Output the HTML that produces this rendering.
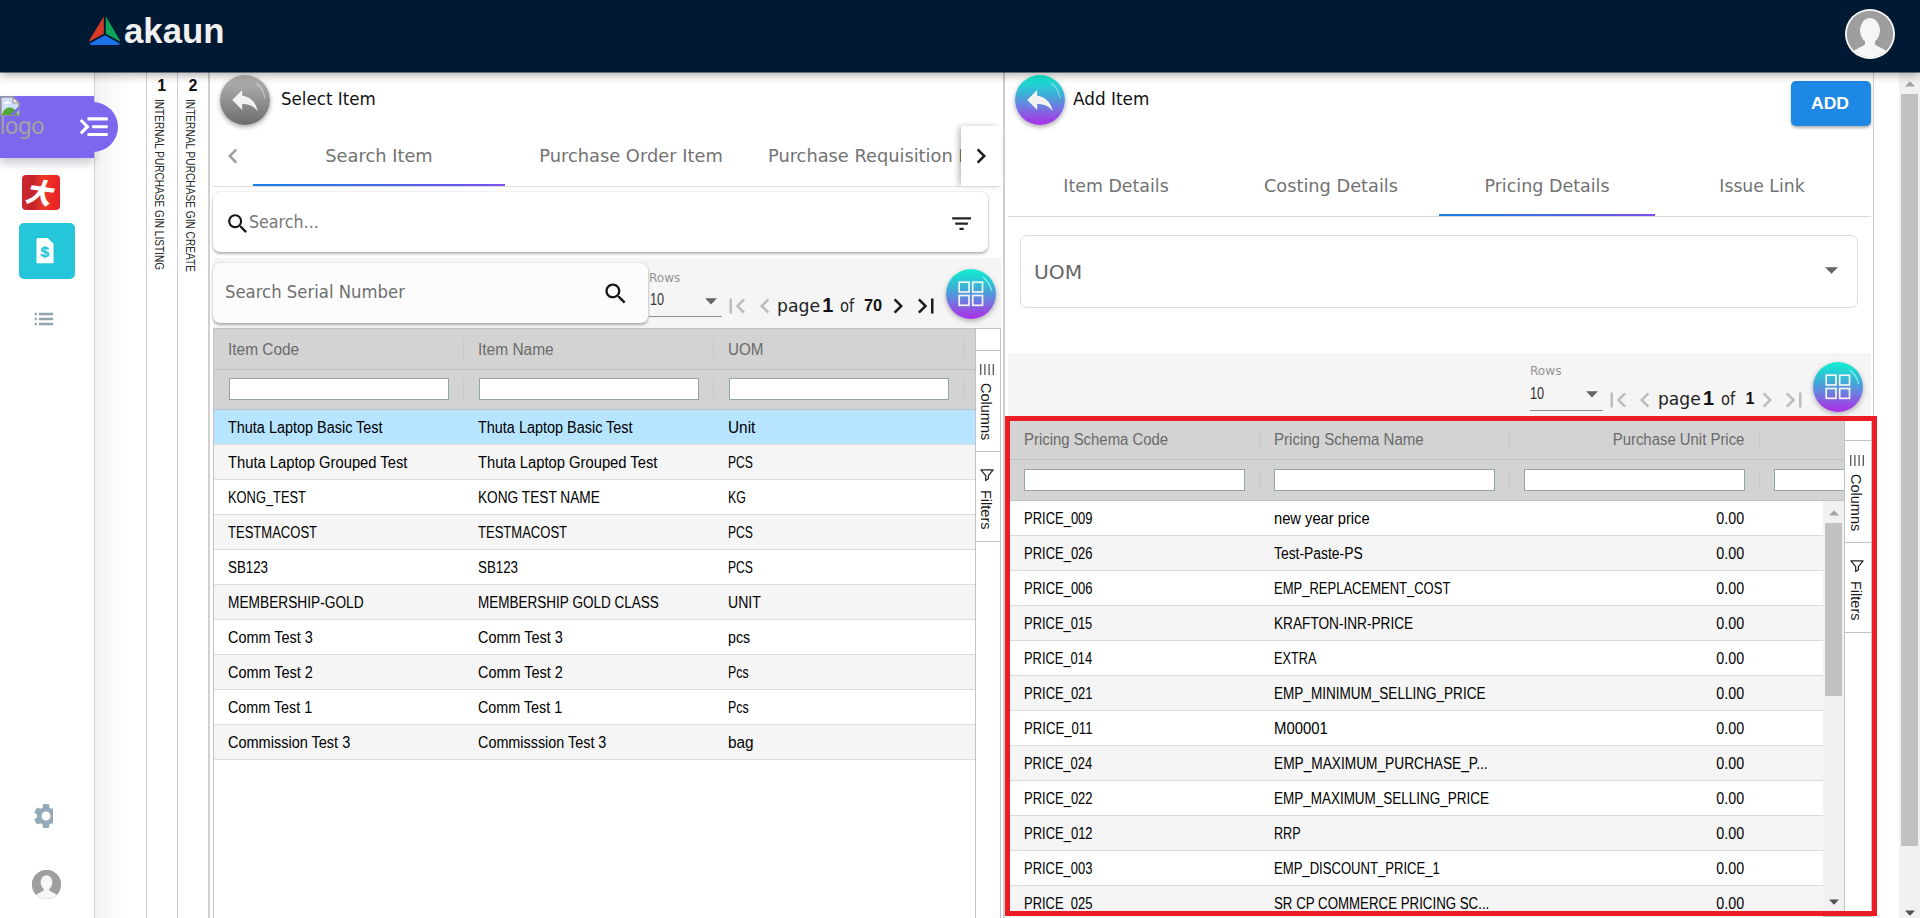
<!DOCTYPE html>
<html lang="en"><head><meta charset="utf-8"><title>akaun - Internal Purchase GIN</title><style>
html,body{margin:0;padding:0}
body{width:1920px;height:918px;overflow:hidden;position:relative;background:#fff;font-family:"Liberation Sans",sans-serif}
.b{position:absolute;display:block}
.t{position:absolute;white-space:nowrap;display:block}
.lib{font-family:"Liberation Sans",sans-serif}
.djv{font-family:"DejaVu Sans","Liberation Sans",sans-serif}
.da{position:absolute;left:5.5px;top:-2px;font:900 27px/38px "Noto Sans CJK SC","WenQuanYi Zen Hei",sans-serif;color:#fff;transform:skewX(-14deg) rotate(8deg);display:block}
.vt{writing-mode:vertical-rl;font:400 12px/16px "Liberation Sans",sans-serif;color:#2a2a2a;width:16px}
.sb{writing-mode:vertical-rl;font:400 14.5px/19px "Liberation Sans",sans-serif;color:#1a1a1a;width:19px}
</style></head>
<body>
<div class="b" style="left:95.00px;top:72.00px;width:51.00px;height:846.00px;background:linear-gradient(90deg,#f3f3f3 0,#fbfbfb 40%,#fff 70%);"></div>
<div class="b" style="left:146.00px;top:72.00px;width:1.00px;height:846.00px;background:#cfcfcf;"></div>
<div class="b" style="left:177.00px;top:72.00px;width:1.00px;height:846.00px;background:#cfcfcf;"></div>
<div class="b" style="left:208.00px;top:72.00px;width:2.00px;height:846.00px;background:#d0d0d0;"></div>
<span class="t lib" style="top:75.00px;font-size:16.00px;line-height:22px;color:#111;font-weight:700;left:161.70px;transform:translateX(-50%) ;">1</span>
<span class="t lib" style="top:75.00px;font-size:16.00px;line-height:22px;color:#111;font-weight:700;left:193.00px;transform:translateX(-50%) ;">2</span>
<span class="t vt" style="left:151.00px;top:99.00px;transform-origin:50% 0;transform:scaleY(0.8399)">INTERNAL PURCHASE GIN LISTING</span>
<span class="t vt" style="left:182.20px;top:99.00px;transform-origin:50% 0;transform:scaleY(0.8452)">INTERNAL PURCHASE GIN CREATE</span>
<div class="b" style="left:0.00px;top:72.00px;width:94.00px;height:846.00px;background:#fff;border-right:1px solid #cfcfcf;"></div>
<div class="b" style="left:0.00px;top:96.00px;width:94.00px;height:62.00px;background:#7b68ee;box-shadow:0 5px 9px rgba(60,60,90,.28);"></div>
<div class="b" style="left:68.00px;top:102.00px;width:50.00px;height:50.00px;background:#7b68ee;border-radius:50%;"></div>
<svg class="b" style="left:74.60px;top:107.70px;transform:scaleX(-1);" width="37.40" height="37.40" viewBox="0 0 24 24"><path fill="#fff" d="M3 18h13v-2H3v2zm0-5h10v-2H3v2zm0-7v2h13V6H3zm18 9.59L17.42 12 21 8.41 19.59 7l-5 5 5 5L21 15.59z"/></svg>
<svg class="b" style="left:0;top:96px" width="20" height="20" viewBox="0 0 20 20"><path d="M1 1h12l6 6v12H1z" fill="#cfe0f8"/><path d="M1 1h12l6 6v12H1z" fill="none" stroke="#9a9a9a" stroke-width="1.6"/><path d="M13 1v6h6z" fill="#f4f4f4" stroke="#9a9a9a" stroke-width="1.2"/><path d="M2 19c1-5 4-7.500 8-7.500 3 0 6 2 8 7.500z" fill="#55a838"/><path d="M4 7.500c0-1 1-1.800 2-1.500.500-1 2.500-1 3 .300 1 0 1.500.700 1.200 1.400z" fill="#fff"/><path d="M19 10 10 19h4l5-5z" fill="#7b68ee"/></svg>
<span class="t djv" style="top:110.50px;font-size:22.50px;line-height:31px;color:#a2a2a2;letter-spacing:-0.900px;left:-0.50px;">logo</span>
<div class="b" style="left:22.00px;top:175.00px;width:38.00px;height:35.00px;background:linear-gradient(90deg,#cc2a30 0,#c4222a 28%,#e93a28 55%,#ee2a24 80%,#e4222a 100%);border-radius:4px;overflow:hidden;"><span class="da">大</span></div>
<div class="b" style="left:19.00px;top:223.00px;width:56.00px;height:56.00px;background:#26c6da;border-radius:5px;"></div>
<svg class="b" style="left:36px;top:238px" width="18" height="26" viewBox="0 0 18 26"><path d="M2.200 0h9.600L17.500 5.700V25.300H.500V1.700Q.500 0 2.200 0z" fill="#fff"/><text x="8.800" y="19" text-anchor="middle" font-family="Liberation Sans, sans-serif" font-weight="700" font-size="15.500" stroke="#26c6da" stroke-width=".4" fill="#26c6da">$</text></svg>
<svg class="b" style="left:29.20px;top:303.80px;transform:scaleX(.82);" width="30.00" height="30.00" viewBox="0 0 24 24"><path fill="#90a4ae" d="M3 13h2v-2H3v2zm0 4h2v-2H3v2zm0-8h2V7H3v2zm4 4h14v-2H7v2zm0 4h14v-2H7v2zM7 7v2h14V7H7z"/></svg>
<div class="b" style="left:28.00px;top:798.00px;width:25.30px;height:34.00px;overflow:hidden;"><svg style="position:absolute;left:2.500px;top:2.800px" width="30" height="30" viewBox="0 0 24 24"><path fill="#94aab8" d="M19.14 12.94c.04-.3.06-.61.06-.94 0-.32-.02-.64-.07-.94l2.03-1.58c.18-.14.23-.41.12-.61l-1.92-3.32c-.12-.22-.37-.29-.59-.22l-2.39.96c-.5-.38-1.03-.7-1.62-.94l-.36-2.54c-.04-.24-.24-.41-.48-.41h-3.84c-.24 0-.43.17-.47.41l-.36 2.54c-.59.24-1.13.57-1.62.94l-2.39-.96c-.22-.08-.47 0-.59.22L2.74 8.87c-.12.21-.08.47.12.61l2.03 1.58c-.05.3-.09.63-.09.94s.02.64.07.94l-2.03 1.58c-.18.14-.23.41-.12.61l1.92 3.32c.12.22.37.29.59.22l2.39-.96c.5.38 1.03.7 1.62.94l.36 2.54c.05.24.24.41.48.41h3.84c.24 0 .44-.17.47-.41l.36-2.54c.59-.24 1.13-.56 1.62-.94l2.39.96c.22.08.47 0 .59-.22l1.92-3.32c.12-.22.07-.47-.12-.61l-2.01-1.58zM12 15.6c-1.98 0-3.6-1.62-3.6-3.6s1.62-3.6 3.6-3.6 3.6 1.62 3.6 3.6-1.62 3.6-3.6 3.6z"/></svg></div>
<svg class="b" style="left:31.50px;top:870.00px" width="29.00" height="29.00" viewBox="0 0 50 50"><defs><clipPath id="c46"><circle cx="25" cy="25" r="25"/></clipPath></defs><circle cx="25" cy="25" r="25" fill="#9e9e9e"/><circle cx="25" cy="25" r="25" fill="#9e9e9e"/><g clip-path="url(#c46)" fill="#f6f6f6"><ellipse cx="25" cy="21.500" rx="10" ry="12.500"/><path d="M20 31h10v4.500c2 2 9 4 13 8V52H7v-8.500c4-4 11-6 13-8z"/></g></svg>
<div class="b" style="left:220.00px;top:75.00px;width:50.00px;height:50.00px;background:linear-gradient(180deg,#b4b4b4 0,#9a9a9a 40%,#6c6c6c 100%);border-radius:50%;box-shadow:0 2px 5px rgba(0,0,0,.35);"></div>
<svg class="b" style="left:220.00px;top:75.00px" width="50" height="50" viewBox="0 0 50 50"><path d="M36.500 8.500Q43 13 45 23" fill="none" stroke="rgba(255,255,255,.45)" stroke-width="1.100" stroke-linecap="round"/></svg>
<svg class="b" style="left:228.20px;top:82.60px;" width="34.00" height="34.00" viewBox="0 0 24 24"><path fill="#f2f2f2" d="M10 9V5l-7 7 7 7v-4.1c5 0 8.5 1.6 11 5.1-1-5-4-10-11-11z"/></svg>
<span class="t djv" style="top:87.00px;font-size:17.00px;line-height:24px;color:#111;left:281.18px;transform-origin:0 50%;transform:scaleX(0.9810);">Select Item</span>
<div class="b" style="left:213.00px;top:186.00px;width:788.00px;height:1.00px;background:#dcdcdc;"></div>
<svg class="b" style="left:218.00px;top:141.00px;" width="30.00" height="30.00" viewBox="0 0 24 24"><path fill="#9e9e9e" d="M15.41 7.41L14 6l-6 6 6 6 1.41-1.41L10.83 12z"/></svg>
<span class="t djv" style="top:144.00px;font-size:17.00px;line-height:24px;color:#727272;left:379.36px;transform:translateX(-50%) scaleX(1.0479);">Search Item</span>
<span class="t djv" style="top:144.00px;font-size:17.00px;line-height:24px;color:#727272;left:630.60px;transform:translateX(-50%) scaleX(1.0485);">Purchase Order Item</span>
<div class="b" style="left:757px;top:126px;width:203.5px;height:60px;overflow:hidden">
<span class="t djv" style="top:18.00px;font-size:17.00px;line-height:24px;color:#727272;left:10.60px;transform-origin:0 50%;transform:scaleX(1.046);">Purchase Requisition Item</span>
</div>
<div class="b" style="left:253.00px;top:183.50px;width:252.00px;height:2.50px;background:linear-gradient(90deg,#1a82e5 0,#4568ea 50%,#7b50f2 100%);"></div>
<div class="b" style="left:960.50px;top:126.00px;width:40.50px;height:60.00px;background:#fff;box-shadow:-3px 0 6px -1px rgba(0,0,0,.3);"></div>
<div class="b" style="left:950.00px;top:186.00px;width:51.00px;height:1.00px;background:#dcdcdc;"></div>
<svg class="b" style="left:966.00px;top:141.00px;" width="30.00" height="30.00" viewBox="0 0 24 24"><path fill="#1c1c1c" d="M10 6L8.59 7.41 13.17 12l-4.58 4.59L10 18l6-6z"/></svg>
<div class="b" style="left:213.00px;top:192.00px;width:775.00px;height:60.00px;background:#fff;border-radius:7px;box-shadow:0 2px 3px rgba(0,0,0,.28),0 0 2px rgba(0,0,0,.18);"></div>
<svg class="b" style="left:224.70px;top:210.70px;" width="25.70" height="25.70" viewBox="0 0 24 24"><path fill="#161616" d="M15.5 14h-.79l-.28-.27C15.41 12.59 16 11.11 16 9.5 16 5.91 13.09 3 9.5 3S3 5.91 3 9.5 5.91 16 9.5 16c1.61 0 3.09-.59 4.23-1.57l.27.28v.79l5 4.99L20.49 19l-4.99-5zm-6 0C7.01 14 5 11.99 5 9.5S7.01 5 9.5 5 14 7.01 14 9.5 11.99 14 9.5 14z"/></svg>
<span class="t djv" style="top:210.00px;font-size:17.00px;line-height:24px;color:#777;left:249.36px;transform-origin:0 50%;transform:scaleX(0.9345);">Search...</span>
<svg class="b" style="left:949.30px;top:211.00px;" width="25.20" height="25.20" viewBox="0 0 24 24"><path fill="#222" d="M10 18h4v-2h-4v2zM3 6v2h18V6H3zm3 7h12v-2H6v2z"/></svg>
<div class="b" style="left:213.00px;top:258.00px;width:788.00px;height:71.00px;background:#f5f5f5;"></div>
<div class="b" style="left:213.00px;top:263.00px;width:435.00px;height:60.00px;background:#fcfcfc;border-radius:7px;box-shadow:0 2px 3px rgba(0,0,0,.28),0 0 2px rgba(0,0,0,.18);"></div>
<span class="t djv" style="top:280.00px;font-size:17.00px;line-height:24px;color:#6f6f6f;left:224.78px;transform-origin:0 50%;transform:scaleX(0.9694);">Search Serial Number</span>
<svg class="b" style="left:601.80px;top:279.80px;" width="27.50" height="27.50" viewBox="0 0 24 24"><path fill="#161616" d="M15.5 14h-.79l-.28-.27C15.41 12.59 16 11.11 16 9.5 16 5.91 13.09 3 9.5 3S3 5.91 3 9.5 5.91 16 9.5 16c1.61 0 3.09-.59 4.23-1.57l.27.28v.79l5 4.99L20.49 19l-4.99-5zm-6 0C7.01 14 5 11.99 5 9.5S7.01 5 9.5 5 14 7.01 14 9.5 11.99 14 9.5 14z"/></svg>
<span class="t djv" style="top:268.80px;font-size:12.50px;line-height:18px;color:#949494;left:648.83px;transform-origin:0 50%;transform:scaleX(0.9665);">Rows</span>
<span class="t lib" style="top:289.20px;font-size:16.00px;line-height:22px;color:#333;left:649.71px;transform-origin:0 50%;transform:scaleX(0.7921);">10</span>
<svg class="b" style="left:705.20px;top:297.60px" width="12" height="7" viewBox="0 0 12 7"><path d="M0 .300h12L6 6.500z" fill="#666"/></svg>
<div class="b" style="left:649.00px;top:316.20px;width:73.00px;height:1.00px;background:#8f8f8f;"></div>
<svg class="b" style="left:721.70px;top:291.20px;" width="30.00" height="30.00" viewBox="0 0 24 24"><path fill="#bdbdbd" d="M18.41 16.59L13.82 12l4.59-4.59L17 6l-6 6 6 6zM6 6h2v12H6z"/></svg>
<svg class="b" style="left:749.50px;top:291.20px;" width="30.00" height="30.00" viewBox="0 0 24 24"><path fill="#bdbdbd" d="M15.41 7.41L14 6l-6 6 6 6 1.41-1.41L10.83 12z"/></svg>
<span class="t djv" style="top:293.50px;font-size:17.00px;line-height:24px;color:#222;left:777.00px;transform-origin:0 50%;transform:scaleX(1.0148);">page</span>
<span class="t lib" style="top:290.50px;font-size:20.00px;line-height:28px;color:#111;font-weight:700;left:822.20px;">1</span>
<span class="t djv" style="top:293.50px;font-size:17.00px;line-height:24px;color:#222;left:839.90px;transform-origin:0 50%;transform:scaleX(0.8665);">of</span>
<span class="t lib" style="top:295.00px;font-size:16.00px;line-height:22px;color:#111;font-weight:700;left:864.24px;transform-origin:0 50%;transform:scaleX(1.0245);">70</span>
<svg class="b" style="left:883.40px;top:291.20px;" width="30.00" height="30.00" viewBox="0 0 24 24"><path fill="#1c1c1c" d="M10 6L8.59 7.41 13.17 12l-4.58 4.59L10 18l6-6z"/></svg>
<svg class="b" style="left:911.20px;top:291.20px;" width="30.00" height="30.00" viewBox="0 0 24 24"><path fill="#1c1c1c" d="M5.59 7.41L10.18 12l-4.59 4.59L7 18l6-6-6-6zM16 6h2v12h-2z"/></svg>
<div class="b" style="left:946.00px;top:268.60px;width:50.00px;height:50.00px;background:linear-gradient(180deg,#10efd0 0,#22d3d3 18%,#41a8d8 42%,#6b7fe0 62%,#8f55e2 80%,#aa2de8 100%);border-radius:50%;box-shadow:0 2px 5px rgba(0,0,0,.3);"></div>
<svg class="b" style="left:946.00px;top:268.60px" width="50" height="50" viewBox="0 0 50 50"><path d="M37 8.500Q43.500 13 45.500 21.500" fill="none" stroke="rgba(160,255,250,.75)" stroke-width="1.200" stroke-linecap="round"/></svg>
<svg class="b" style="left:957.10px;top:280.00px" width="28" height="28" viewBox="0 0 28 28"><g fill="none" stroke="#f4f4f4" stroke-width="1.700"><rect x="2.200" y="2.200" width="9.800" height="9.800"/><rect x="15.700" y="2.200" width="9.800" height="9.800"/><rect x="2.200" y="15.500" width="9.800" height="9.800"/><rect x="15.700" y="15.500" width="9.800" height="9.800"/></g></svg>
<div class="b" style="left:213.00px;top:328.00px;width:788.00px;height:595.00px;background:#fff;border:1px solid #bdc3c7;box-sizing:border-box;"></div>
<div class="b" style="left:214.00px;top:329.00px;width:761.00px;height:81.00px;background:#d3d3d3;"></div>
<div class="b" style="left:214.00px;top:369.00px;width:761.00px;height:1.00px;background:#bdc3c7;"></div>
<div class="b" style="left:214.00px;top:409.00px;width:761.00px;height:1.00px;background:#bdc3c7;"></div>
<div class="b" style="left:214.00px;top:410.00px;width:761.00px;height:35.00px;background:#b7e4ff;border-bottom:1px solid #d9dcde;box-sizing:border-box;"></div>
<div class="b" style="left:214.00px;top:445.00px;width:761.00px;height:35.00px;background:#f5f5f5;border-bottom:1px solid #d9dcde;box-sizing:border-box;"></div>
<div class="b" style="left:214.00px;top:480.00px;width:761.00px;height:35.00px;background:#fff;border-bottom:1px solid #d9dcde;box-sizing:border-box;"></div>
<div class="b" style="left:214.00px;top:515.00px;width:761.00px;height:35.00px;background:#f5f5f5;border-bottom:1px solid #d9dcde;box-sizing:border-box;"></div>
<div class="b" style="left:214.00px;top:550.00px;width:761.00px;height:35.00px;background:#fff;border-bottom:1px solid #d9dcde;box-sizing:border-box;"></div>
<div class="b" style="left:214.00px;top:585.00px;width:761.00px;height:35.00px;background:#f5f5f5;border-bottom:1px solid #d9dcde;box-sizing:border-box;"></div>
<div class="b" style="left:214.00px;top:620.00px;width:761.00px;height:35.00px;background:#fff;border-bottom:1px solid #d9dcde;box-sizing:border-box;"></div>
<div class="b" style="left:214.00px;top:655.00px;width:761.00px;height:35.00px;background:#f5f5f5;border-bottom:1px solid #d9dcde;box-sizing:border-box;"></div>
<div class="b" style="left:214.00px;top:690.00px;width:761.00px;height:35.00px;background:#fff;border-bottom:1px solid #d9dcde;box-sizing:border-box;"></div>
<div class="b" style="left:214.00px;top:725.00px;width:761.00px;height:35.00px;background:#f5f5f5;border-bottom:1px solid #d9dcde;box-sizing:border-box;"></div>
<span class="t lib" style="top:339.00px;font-size:16.00px;line-height:22px;color:#6a6a6a;left:228.30px;transform-origin:0 50%;transform:scaleX(0.9640);">Item Code</span>
<div class="b" style="left:228.50px;top:378.00px;width:220.50px;height:21.50px;background:#fff;border:1px solid #95a5a6;box-sizing:border-box;"></div>
<div class="b" style="left:463.00px;top:339.00px;width:1.00px;height:20.00px;background:#c4c9cc;"></div>
<div class="b" style="left:463.00px;top:379.00px;width:1.00px;height:20.00px;background:#c4c9cc;"></div>
<span class="t lib" style="top:416.50px;font-size:16.00px;line-height:22px;color:#000;left:228.30px;transform-origin:0 50%;transform:scaleX(0.9019);">Thuta Laptop Basic Test</span>
<span class="t lib" style="top:451.50px;font-size:16.00px;line-height:22px;color:#000;left:228.30px;transform-origin:0 50%;transform:scaleX(0.9225);">Thuta Laptop Grouped Test</span>
<span class="t lib" style="top:486.50px;font-size:16.00px;line-height:22px;color:#000;left:228.30px;transform-origin:0 50%;transform:scaleX(0.8042);">KONG_TEST</span>
<span class="t lib" style="top:521.50px;font-size:16.00px;line-height:22px;color:#000;left:228.30px;transform-origin:0 50%;transform:scaleX(0.8148);">TESTMACOST</span>
<span class="t lib" style="top:556.50px;font-size:16.00px;line-height:22px;color:#000;left:228.30px;transform-origin:0 50%;transform:scaleX(0.8324);">SB123</span>
<span class="t lib" style="top:591.50px;font-size:16.00px;line-height:22px;color:#000;left:228.30px;transform-origin:0 50%;transform:scaleX(0.8569);">MEMBERSHIP-GOLD</span>
<span class="t lib" style="top:626.50px;font-size:16.00px;line-height:22px;color:#000;left:228.30px;transform-origin:0 50%;transform:scaleX(0.9025);">Comm Test 3</span>
<span class="t lib" style="top:661.50px;font-size:16.00px;line-height:22px;color:#000;left:228.30px;transform-origin:0 50%;transform:scaleX(0.9021);">Comm Test 2</span>
<span class="t lib" style="top:696.50px;font-size:16.00px;line-height:22px;color:#000;left:228.30px;transform-origin:0 50%;transform:scaleX(0.8956);">Comm Test 1</span>
<span class="t lib" style="top:731.50px;font-size:16.00px;line-height:22px;color:#000;left:228.30px;transform-origin:0 50%;transform:scaleX(0.9065);">Commission Test 3</span>
<span class="t lib" style="top:339.00px;font-size:16.00px;line-height:22px;color:#6a6a6a;left:478.30px;transform-origin:0 50%;transform:scaleX(0.9676);">Item Name</span>
<div class="b" style="left:478.50px;top:378.00px;width:220.50px;height:21.50px;background:#fff;border:1px solid #95a5a6;box-sizing:border-box;"></div>
<div class="b" style="left:713.00px;top:339.00px;width:1.00px;height:20.00px;background:#c4c9cc;"></div>
<div class="b" style="left:713.00px;top:379.00px;width:1.00px;height:20.00px;background:#c4c9cc;"></div>
<span class="t lib" style="top:416.50px;font-size:16.00px;line-height:22px;color:#000;left:478.30px;transform-origin:0 50%;transform:scaleX(0.9019);">Thuta Laptop Basic Test</span>
<span class="t lib" style="top:451.50px;font-size:16.00px;line-height:22px;color:#000;left:478.30px;transform-origin:0 50%;transform:scaleX(0.9225);">Thuta Laptop Grouped Test</span>
<span class="t lib" style="top:486.50px;font-size:16.00px;line-height:22px;color:#000;left:478.30px;transform-origin:0 50%;transform:scaleX(0.8542);">KONG TEST NAME</span>
<span class="t lib" style="top:521.50px;font-size:16.00px;line-height:22px;color:#000;left:478.30px;transform-origin:0 50%;transform:scaleX(0.8148);">TESTMACOST</span>
<span class="t lib" style="top:556.50px;font-size:16.00px;line-height:22px;color:#000;left:478.30px;transform-origin:0 50%;transform:scaleX(0.8324);">SB123</span>
<span class="t lib" style="top:591.50px;font-size:16.00px;line-height:22px;color:#000;left:478.30px;transform-origin:0 50%;transform:scaleX(0.8448);">MEMBERSHIP GOLD CLASS</span>
<span class="t lib" style="top:626.50px;font-size:16.00px;line-height:22px;color:#000;left:478.30px;transform-origin:0 50%;transform:scaleX(0.9025);">Comm Test 3</span>
<span class="t lib" style="top:661.50px;font-size:16.00px;line-height:22px;color:#000;left:478.30px;transform-origin:0 50%;transform:scaleX(0.9021);">Comm Test 2</span>
<span class="t lib" style="top:696.50px;font-size:16.00px;line-height:22px;color:#000;left:478.30px;transform-origin:0 50%;transform:scaleX(0.8956);">Comm Test 1</span>
<span class="t lib" style="top:731.50px;font-size:16.00px;line-height:22px;color:#000;left:478.30px;transform-origin:0 50%;transform:scaleX(0.8985);">Commisssion Test 3</span>
<span class="t lib" style="top:339.00px;font-size:16.00px;line-height:22px;color:#6a6a6a;left:728.30px;transform-origin:0 50%;transform:scaleX(0.9489);">UOM</span>
<div class="b" style="left:728.50px;top:378.00px;width:220.50px;height:21.50px;background:#fff;border:1px solid #95a5a6;box-sizing:border-box;"></div>
<div class="b" style="left:963.00px;top:339.00px;width:1.00px;height:20.00px;background:#c4c9cc;"></div>
<div class="b" style="left:963.00px;top:379.00px;width:1.00px;height:20.00px;background:#c4c9cc;"></div>
<span class="t lib" style="top:416.50px;font-size:16.00px;line-height:22px;color:#000;left:728.30px;transform-origin:0 50%;transform:scaleX(0.9597);">Unit</span>
<span class="t lib" style="top:451.50px;font-size:16.00px;line-height:22px;color:#000;left:728.30px;transform-origin:0 50%;transform:scaleX(0.7569);">PCS</span>
<span class="t lib" style="top:486.50px;font-size:16.00px;line-height:22px;color:#000;left:728.30px;transform-origin:0 50%;transform:scaleX(0.7778);">KG</span>
<span class="t lib" style="top:521.50px;font-size:16.00px;line-height:22px;color:#000;left:728.30px;transform-origin:0 50%;transform:scaleX(0.7569);">PCS</span>
<span class="t lib" style="top:556.50px;font-size:16.00px;line-height:22px;color:#000;left:728.30px;transform-origin:0 50%;transform:scaleX(0.7575);">PCS</span>
<span class="t lib" style="top:591.50px;font-size:16.00px;line-height:22px;color:#000;left:728.30px;transform-origin:0 50%;transform:scaleX(0.8776);">UNIT</span>
<span class="t lib" style="top:626.50px;font-size:16.00px;line-height:22px;color:#000;left:728.30px;transform-origin:0 50%;transform:scaleX(0.8859);">pcs</span>
<span class="t lib" style="top:661.50px;font-size:16.00px;line-height:22px;color:#000;left:728.30px;transform-origin:0 50%;transform:scaleX(0.7749);">Pcs</span>
<span class="t lib" style="top:696.50px;font-size:16.00px;line-height:22px;color:#000;left:728.30px;transform-origin:0 50%;transform:scaleX(0.7764);">Pcs</span>
<span class="t lib" style="top:731.50px;font-size:16.00px;line-height:22px;color:#000;left:728.30px;transform-origin:0 50%;transform:scaleX(0.9578);">bag</span>
<div class="b" style="left:975.00px;top:329.00px;width:1.00px;height:589.00px;background:#bdc3c7;"></div>
<div class="b" style="left:976.00px;top:349.50px;width:24.00px;height:1.20px;background:#bdc3c7;"></div>
<div class="b" style="left:976.00px;top:451.00px;width:24.00px;height:1.20px;background:#bdc3c7;"></div>
<div class="b" style="left:976.00px;top:540.80px;width:24.00px;height:1.20px;background:#bdc3c7;"></div>
<svg class="b" style="left:979.90px;top:364.20px" width="14" height="12" viewBox="0 0 14 12"><path d="M.700 0v11M4.900 0v11M9.100 0v11M13.300 0v11" stroke="#555" stroke-width="1.300" fill="none"/></svg>
<span class="t sb" style="left:976.40px;top:383.30px">Columns</span>
<svg class="b" style="left:979.90px;top:469.30px" width="14" height="13" viewBox="0 0 14 13"><path d="M.900 .900H13.100L8.400 6.600V9.700L5.700 11.600V6.600z" stroke="#222" stroke-width="1.250" fill="none" stroke-linejoin="round"/></svg>
<span class="t sb" style="left:976.40px;top:490.00px">Filters</span>
<div class="b" style="left:1003.00px;top:72.00px;width:2.00px;height:846.00px;background:#cdcdcd;"></div>
<div class="b" style="left:1015.00px;top:75.00px;width:50.00px;height:50.00px;background:linear-gradient(180deg,#10efd0 0,#22d3d3 18%,#41a8d8 42%,#6b7fe0 62%,#8f55e2 80%,#aa2de8 100%);border-radius:50%;box-shadow:0 2px 5px rgba(0,0,0,.35);"></div>
<svg class="b" style="left:1015.00px;top:75.00px" width="50" height="50" viewBox="0 0 50 50"><path d="M36.500 8.500Q43 13 45 23" fill="none" stroke="rgba(255,255,255,.45)" stroke-width="1.100" stroke-linecap="round"/></svg>
<svg class="b" style="left:1023.20px;top:82.60px;" width="34.00" height="34.00" viewBox="0 0 24 24"><path fill="#f2f2f2" d="M10 9V5l-7 7 7 7v-4.1c5 0 8.5 1.6 11 5.1-1-5-4-10-11-11z"/></svg>
<span class="t djv" style="top:86.80px;font-size:17.00px;line-height:24px;color:#111;left:1073.38px;transform-origin:0 50%;transform:scaleX(0.9908);">Add Item</span>
<div class="b" style="left:1791.00px;top:81.00px;width:80.00px;height:45.00px;background:#1e88e5;border-radius:5px;box-shadow:0 2px 3px rgba(0,0,0,.3);"></div>
<span class="t lib" style="top:91.80px;font-size:17.00px;line-height:24px;color:#fff;font-weight:700;left:1830.25px;transform:translateX(-50%) scaleX(1.0324);">ADD</span>
<div class="b" style="left:1008.00px;top:216.00px;width:863.00px;height:1.00px;background:#dcdcdc;"></div>
<span class="t djv" style="top:174.30px;font-size:17.00px;line-height:24px;color:#727272;left:1115.90px;transform:translateX(-50%) scaleX(1.0232);">Item Details</span>
<span class="t djv" style="top:174.30px;font-size:17.00px;line-height:24px;color:#727272;left:1330.74px;transform:translateX(-50%) scaleX(1.0443);">Costing Details</span>
<span class="t djv" style="top:174.30px;font-size:17.00px;line-height:24px;color:#727272;left:1546.69px;transform:translateX(-50%) scaleX(1.0288);">Pricing Details</span>
<span class="t djv" style="top:174.30px;font-size:17.00px;line-height:24px;color:#727272;left:1762.29px;transform:translateX(-50%) scaleX(1.0140);">Issue Link</span>
<div class="b" style="left:1439.00px;top:213.50px;width:216.00px;height:2.50px;background:linear-gradient(90deg,#1a82e5 0,#4568ea 50%,#7b50f2 100%);"></div>
<div class="b" style="left:1020.00px;top:235.00px;width:838.00px;height:72.60px;background:#fff;border:1px solid #dedede;border-radius:7px;box-sizing:border-box;"></div>
<span class="t djv" style="top:258.80px;font-size:19.50px;line-height:27px;color:#666;left:1034.22px;transform-origin:0 50%;transform:scaleX(1.0380);">UOM</span>
<svg class="b" style="left:1825.300px;top:267.300px" width="13" height="7" viewBox="0 0 13 7"><path d="M0 .300h13L6.500 6.800z" fill="#666"/></svg>
<div class="b" style="left:1008.00px;top:353.00px;width:863.00px;height:68.00px;background:#f5f5f5;"></div>
<span class="t djv" style="top:362.20px;font-size:12.50px;line-height:18px;color:#949494;left:1529.66px;transform-origin:0 50%;transform:scaleX(0.9692);">Rows</span>
<span class="t lib" style="top:382.60px;font-size:16.00px;line-height:22px;color:#333;left:1530.14px;transform-origin:0 50%;transform:scaleX(0.7951);">10</span>
<svg class="b" style="left:1586.00px;top:391.00px" width="12" height="7" viewBox="0 0 12 7"><path d="M0 .300h12L6 6.500z" fill="#666"/></svg>
<div class="b" style="left:1529.80px;top:409.60px;width:73.00px;height:1.00px;background:#8f8f8f;"></div>
<svg class="b" style="left:1602.50px;top:384.60px;" width="30.00" height="30.00" viewBox="0 0 24 24"><path fill="#bdbdbd" d="M18.41 16.59L13.82 12l4.59-4.59L17 6l-6 6 6 6zM6 6h2v12H6z"/></svg>
<svg class="b" style="left:1630.30px;top:384.60px;" width="30.00" height="30.00" viewBox="0 0 24 24"><path fill="#bdbdbd" d="M15.41 7.41L14 6l-6 6 6 6 1.41-1.41L10.83 12z"/></svg>
<span class="t djv" style="top:386.90px;font-size:17.00px;line-height:24px;color:#222;left:1657.66px;transform-origin:0 50%;transform:scaleX(1.0069);">page</span>
<span class="t lib" style="top:383.90px;font-size:20.00px;line-height:28px;color:#111;font-weight:700;left:1703.00px;">1</span>
<span class="t djv" style="top:386.90px;font-size:17.00px;line-height:24px;color:#222;left:1721.00px;transform-origin:0 50%;transform:scaleX(0.8633);">of</span>
<span class="t lib" style="top:388.40px;font-size:16.00px;line-height:22px;color:#111;font-weight:700;left:1745.60px;">1</span>
<svg class="b" style="left:1751.60px;top:384.60px;" width="30.00" height="30.00" viewBox="0 0 24 24"><path fill="#bdbdbd" d="M10 6L8.59 7.41 13.17 12l-4.58 4.59L10 18l6-6z"/></svg>
<svg class="b" style="left:1778.80px;top:384.60px;" width="30.00" height="30.00" viewBox="0 0 24 24"><path fill="#bdbdbd" d="M5.59 7.41L10.18 12l-4.59 4.59L7 18l6-6-6-6zM16 6h2v12h-2z"/></svg>
<div class="b" style="left:1813.00px;top:362.00px;width:50.00px;height:50.00px;background:linear-gradient(180deg,#10efd0 0,#22d3d3 18%,#41a8d8 42%,#6b7fe0 62%,#8f55e2 80%,#aa2de8 100%);border-radius:50%;box-shadow:0 2px 5px rgba(0,0,0,.3);"></div>
<svg class="b" style="left:1813.00px;top:362.00px" width="50" height="50" viewBox="0 0 50 50"><path d="M37 8.500Q43.500 13 45.500 21.500" fill="none" stroke="rgba(160,255,250,.75)" stroke-width="1.200" stroke-linecap="round"/></svg>
<svg class="b" style="left:1824.10px;top:373.40px" width="28" height="28" viewBox="0 0 28 28"><g fill="none" stroke="#f4f4f4" stroke-width="1.700"><rect x="2.200" y="2.200" width="9.800" height="9.800"/><rect x="15.700" y="2.200" width="9.800" height="9.800"/><rect x="2.200" y="15.500" width="9.800" height="9.800"/><rect x="15.700" y="15.500" width="9.800" height="9.800"/></g></svg>
<div class="b" style="left:1008.50px;top:420.00px;width:863.00px;height:497.00px;background:#fff;border:1px solid #bdc3c7;box-sizing:border-box;"></div>
<div class="b" style="left:1009.50px;top:421.00px;width:834.50px;height:80.00px;background:#d3d3d3;"></div>
<div class="b" style="left:1009.50px;top:459.00px;width:834.50px;height:1.00px;background:#bdc3c7;"></div>
<div class="b" style="left:1009.50px;top:500.00px;width:834.50px;height:1.00px;background:#bdc3c7;"></div>
<div class="b" style="left:1009.50px;top:501.00px;width:813.50px;height:35.00px;background:#fff;border-bottom:1px solid #d9dcde;box-sizing:border-box;"></div>
<div class="b" style="left:1009.50px;top:536.00px;width:813.50px;height:35.00px;background:#f5f5f5;border-bottom:1px solid #d9dcde;box-sizing:border-box;"></div>
<div class="b" style="left:1009.50px;top:571.00px;width:813.50px;height:35.00px;background:#fff;border-bottom:1px solid #d9dcde;box-sizing:border-box;"></div>
<div class="b" style="left:1009.50px;top:606.00px;width:813.50px;height:35.00px;background:#f5f5f5;border-bottom:1px solid #d9dcde;box-sizing:border-box;"></div>
<div class="b" style="left:1009.50px;top:641.00px;width:813.50px;height:35.00px;background:#fff;border-bottom:1px solid #d9dcde;box-sizing:border-box;"></div>
<div class="b" style="left:1009.50px;top:676.00px;width:813.50px;height:35.00px;background:#f5f5f5;border-bottom:1px solid #d9dcde;box-sizing:border-box;"></div>
<div class="b" style="left:1009.50px;top:711.00px;width:813.50px;height:35.00px;background:#fff;border-bottom:1px solid #d9dcde;box-sizing:border-box;"></div>
<div class="b" style="left:1009.50px;top:746.00px;width:813.50px;height:35.00px;background:#f5f5f5;border-bottom:1px solid #d9dcde;box-sizing:border-box;"></div>
<div class="b" style="left:1009.50px;top:781.00px;width:813.50px;height:35.00px;background:#fff;border-bottom:1px solid #d9dcde;box-sizing:border-box;"></div>
<div class="b" style="left:1009.50px;top:816.00px;width:813.50px;height:35.00px;background:#f5f5f5;border-bottom:1px solid #d9dcde;box-sizing:border-box;"></div>
<div class="b" style="left:1009.50px;top:851.00px;width:813.50px;height:35.00px;background:#fff;border-bottom:1px solid #d9dcde;box-sizing:border-box;"></div>
<div class="b" style="left:1009.50px;top:886.00px;width:813.50px;height:35.00px;background:#f5f5f5;border-bottom:1px solid #d9dcde;box-sizing:border-box;"></div>
<span class="t lib" style="top:429.00px;font-size:16.00px;line-height:22px;color:#6a6a6a;left:1023.80px;transform-origin:0 50%;transform:scaleX(0.9312);">Pricing Schema Code</span>
<div class="b" style="left:1024.00px;top:469.00px;width:220.50px;height:21.50px;background:#fff;border:1px solid #95a5a6;box-sizing:border-box;"></div>
<div class="b" style="left:1258.50px;top:430.00px;width:1.00px;height:20.00px;background:#c4c9cc;"></div>
<div class="b" style="left:1258.50px;top:470.00px;width:1.00px;height:20.00px;background:#c4c9cc;"></div>
<span class="t lib" style="top:507.50px;font-size:16.00px;line-height:22px;color:#000;left:1023.80px;transform-origin:0 50%;transform:scaleX(0.8115);">PRICE_009</span>
<span class="t lib" style="top:542.50px;font-size:16.00px;line-height:22px;color:#000;left:1023.80px;transform-origin:0 50%;transform:scaleX(0.8115);">PRICE_026</span>
<span class="t lib" style="top:577.50px;font-size:16.00px;line-height:22px;color:#000;left:1023.80px;transform-origin:0 50%;transform:scaleX(0.8115);">PRICE_006</span>
<span class="t lib" style="top:612.50px;font-size:16.00px;line-height:22px;color:#000;left:1023.80px;transform-origin:0 50%;transform:scaleX(0.8083);">PRICE_015</span>
<span class="t lib" style="top:647.50px;font-size:16.00px;line-height:22px;color:#000;left:1023.80px;transform-origin:0 50%;transform:scaleX(0.8055);">PRICE_014</span>
<span class="t lib" style="top:682.50px;font-size:16.00px;line-height:22px;color:#000;left:1023.80px;transform-origin:0 50%;transform:scaleX(0.8115);">PRICE_021</span>
<span class="t lib" style="top:717.50px;font-size:16.00px;line-height:22px;color:#000;left:1023.80px;transform-origin:0 50%;transform:scaleX(0.8221);">PRICE_011</span>
<span class="t lib" style="top:752.50px;font-size:16.00px;line-height:22px;color:#000;left:1023.80px;transform-origin:0 50%;transform:scaleX(0.8055);">PRICE_024</span>
<span class="t lib" style="top:787.50px;font-size:16.00px;line-height:22px;color:#000;left:1023.80px;transform-origin:0 50%;transform:scaleX(0.8115);">PRICE_022</span>
<span class="t lib" style="top:822.50px;font-size:16.00px;line-height:22px;color:#000;left:1023.80px;transform-origin:0 50%;transform:scaleX(0.8117);">PRICE_012</span>
<span class="t lib" style="top:857.50px;font-size:16.00px;line-height:22px;color:#000;left:1023.80px;transform-origin:0 50%;transform:scaleX(0.8099);">PRICE_003</span>
<span class="t lib" style="top:892.50px;font-size:16.00px;line-height:22px;color:#000;left:1023.80px;transform-origin:0 50%;transform:scaleX(0.8099);">PRICE_025</span>
<span class="t lib" style="top:429.00px;font-size:16.00px;line-height:22px;color:#6a6a6a;left:1273.80px;transform-origin:0 50%;transform:scaleX(0.9404);">Pricing Schema Name</span>
<div class="b" style="left:1274.00px;top:469.00px;width:220.50px;height:21.50px;background:#fff;border:1px solid #95a5a6;box-sizing:border-box;"></div>
<div class="b" style="left:1508.50px;top:430.00px;width:1.00px;height:20.00px;background:#c4c9cc;"></div>
<div class="b" style="left:1508.50px;top:470.00px;width:1.00px;height:20.00px;background:#c4c9cc;"></div>
<span class="t lib" style="top:507.50px;font-size:16.00px;line-height:22px;color:#000;left:1273.80px;transform-origin:0 50%;transform:scaleX(0.9194);">new year price</span>
<span class="t lib" style="top:542.50px;font-size:16.00px;line-height:22px;color:#000;left:1273.80px;transform-origin:0 50%;transform:scaleX(0.8673);">Test-Paste-PS</span>
<span class="t lib" style="top:577.50px;font-size:16.00px;line-height:22px;color:#000;left:1273.80px;transform-origin:0 50%;transform:scaleX(0.8129);">EMP_REPLACEMENT_COST</span>
<span class="t lib" style="top:612.50px;font-size:16.00px;line-height:22px;color:#000;left:1273.80px;transform-origin:0 50%;transform:scaleX(0.8527);">KRAFTON-INR-PRICE</span>
<span class="t lib" style="top:647.50px;font-size:16.00px;line-height:22px;color:#000;left:1273.80px;transform-origin:0 50%;transform:scaleX(0.7952);">EXTRA</span>
<span class="t lib" style="top:682.50px;font-size:16.00px;line-height:22px;color:#000;left:1273.80px;transform-origin:0 50%;transform:scaleX(0.8464);">EMP_MINIMUM_SELLING_PRICE</span>
<span class="t lib" style="top:717.50px;font-size:16.00px;line-height:22px;color:#000;left:1273.80px;transform-origin:0 50%;transform:scaleX(0.9306);">M00001</span>
<span class="t lib" style="top:752.50px;font-size:16.00px;line-height:22px;color:#000;left:1273.80px;transform-origin:0 50%;transform:scaleX(0.8560);">EMP_MAXIMUM_PURCHASE_P...</span>
<span class="t lib" style="top:787.50px;font-size:16.00px;line-height:22px;color:#000;left:1273.80px;transform-origin:0 50%;transform:scaleX(0.8423);">EMP_MAXIMUM_SELLING_PRICE</span>
<span class="t lib" style="top:822.50px;font-size:16.00px;line-height:22px;color:#000;left:1273.80px;transform-origin:0 50%;transform:scaleX(0.7859);">RRP</span>
<span class="t lib" style="top:857.50px;font-size:16.00px;line-height:22px;color:#000;left:1273.80px;transform-origin:0 50%;transform:scaleX(0.8181);">EMP_DISCOUNT_PRICE_1</span>
<span class="t lib" style="top:892.50px;font-size:16.00px;line-height:22px;color:#000;left:1273.80px;transform-origin:0 50%;transform:scaleX(0.8303);">SR CP COMMERCE PRICING SC...</span>
<span class="t lib" style="top:429.00px;font-size:16.00px;line-height:22px;color:#6a6a6a;right:175.14px;transform-origin:100% 50%;transform:scaleX(0.9311);">Purchase Unit Price</span>
<div class="b" style="left:1524.00px;top:469.00px;width:220.50px;height:21.50px;background:#fff;border:1px solid #95a5a6;box-sizing:border-box;"></div>
<div class="b" style="left:1758.50px;top:430.00px;width:1.00px;height:20.00px;background:#c4c9cc;"></div>
<div class="b" style="left:1758.50px;top:470.00px;width:1.00px;height:20.00px;background:#c4c9cc;"></div>
<span class="t lib" style="top:507.50px;font-size:16.00px;line-height:22px;color:#000;right:175.53px;transform-origin:100% 50%;transform:scaleX(0.8938);">0.00</span>
<span class="t lib" style="top:542.50px;font-size:16.00px;line-height:22px;color:#000;right:175.53px;transform-origin:100% 50%;transform:scaleX(0.8936);">0.00</span>
<span class="t lib" style="top:577.50px;font-size:16.00px;line-height:22px;color:#000;right:175.53px;transform-origin:100% 50%;transform:scaleX(0.8938);">0.00</span>
<span class="t lib" style="top:612.50px;font-size:16.00px;line-height:22px;color:#000;right:175.53px;transform-origin:100% 50%;transform:scaleX(0.8936);">0.00</span>
<span class="t lib" style="top:647.50px;font-size:16.00px;line-height:22px;color:#000;right:175.53px;transform-origin:100% 50%;transform:scaleX(0.8938);">0.00</span>
<span class="t lib" style="top:682.50px;font-size:16.00px;line-height:22px;color:#000;right:175.53px;transform-origin:100% 50%;transform:scaleX(0.8936);">0.00</span>
<span class="t lib" style="top:717.50px;font-size:16.00px;line-height:22px;color:#000;right:175.53px;transform-origin:100% 50%;transform:scaleX(0.8938);">0.00</span>
<span class="t lib" style="top:752.50px;font-size:16.00px;line-height:22px;color:#000;right:175.53px;transform-origin:100% 50%;transform:scaleX(0.8936);">0.00</span>
<span class="t lib" style="top:787.50px;font-size:16.00px;line-height:22px;color:#000;right:175.53px;transform-origin:100% 50%;transform:scaleX(0.8938);">0.00</span>
<span class="t lib" style="top:822.50px;font-size:16.00px;line-height:22px;color:#000;right:175.53px;transform-origin:100% 50%;transform:scaleX(0.8936);">0.00</span>
<span class="t lib" style="top:857.50px;font-size:16.00px;line-height:22px;color:#000;right:175.53px;transform-origin:100% 50%;transform:scaleX(0.8938);">0.00</span>
<span class="t lib" style="top:892.50px;font-size:16.00px;line-height:22px;color:#000;right:175.53px;transform-origin:100% 50%;transform:scaleX(0.8938);">0.00</span>
<span class="t lib" style="top:429.00px;font-size:16.00px;line-height:22px;color:#6a6a6a;left:1773.80px;"></span>
<div class="b" style="left:1774.00px;top:469.00px;width:70.00px;height:21.50px;background:#fff;border:1px solid #95a5a6;box-sizing:border-box;border-right:0;"></div>
<div class="b" style="left:1823.00px;top:501.00px;width:21.00px;height:411.00px;background:#f1f1f1;"></div>
<div class="b" style="left:1825.00px;top:522.50px;width:17.00px;height:173.00px;background:#c1c1c1;"></div>
<svg class="b" style="left:1828.50px;top:510.00px" width="10" height="6" viewBox="0 0 10 6"><path d="M0 5.500h10L5 .300z" fill="#a3a3a3"/></svg>
<svg class="b" style="left:1828.50px;top:898.50px" width="10" height="6" viewBox="0 0 10 6"><path d="M0 .500h10L5 5.700z" fill="#505050"/></svg>
<div class="b" style="left:1844.00px;top:421.00px;width:1.00px;height:491.00px;background:#bdc3c7;"></div>
<div class="b" style="left:1845.00px;top:439.50px;width:25.50px;height:1.20px;background:#bdc3c7;"></div>
<div class="b" style="left:1845.00px;top:542.00px;width:25.50px;height:1.20px;background:#bdc3c7;"></div>
<div class="b" style="left:1845.00px;top:631.80px;width:25.50px;height:1.20px;background:#bdc3c7;"></div>
<svg class="b" style="left:1849.65px;top:455.20px" width="14" height="12" viewBox="0 0 14 12"><path d="M.700 0v11M4.900 0v11M9.100 0v11M13.300 0v11" stroke="#555" stroke-width="1.300" fill="none"/></svg>
<span class="t sb" style="left:1846.15px;top:474.30px">Columns</span>
<svg class="b" style="left:1849.65px;top:560.30px" width="14" height="13" viewBox="0 0 14 13"><path d="M.900 .900H13.100L8.400 6.600V9.700L5.700 11.600V6.600z" stroke="#222" stroke-width="1.250" fill="none" stroke-linejoin="round"/></svg>
<span class="t sb" style="left:1846.15px;top:581.00px">Filters</span>
<div class="b" style="left:1873.00px;top:72.00px;width:1.00px;height:846.00px;background:#cfcfcf;"></div>
<div class="b" style="left:1005.00px;top:416.00px;width:872.00px;height:500.00px;border:5px solid #ec1c24;box-sizing:border-box;"></div>
<div class="b" style="left:1899.00px;top:72.00px;width:21.00px;height:846.00px;background:#f1f1f1;"></div>
<div class="b" style="left:1901.00px;top:94.30px;width:17.00px;height:752.20px;background:#c1c1c1;"></div>
<svg class="b" style="left:1904.500px;top:81px" width="10" height="6" viewBox="0 0 10 6"><path d="M0 5.500h10L5 .300z" fill="#a3a3a3"/></svg>
<svg class="b" style="left:1904.500px;top:910px" width="10" height="6" viewBox="0 0 10 6"><path d="M0 .500h10L5 5.700z" fill="#505050"/></svg>
<div class="b" style="left:0.00px;top:0.00px;width:1920.00px;height:72.00px;background:#001a33;box-shadow:0 3px 9px rgba(0,0,0,.33);"></div>
<div class="b" style="left:0.00px;top:72.00px;width:1920.00px;height:1.00px;background:rgba(0,26,51,.5);"></div>
<svg class="b" style="left:86px;top:14px" width="38" height="34" viewBox="86 14 38 34"><path d="M103.800 17.200Q104 16.300 103 17.800L89.200 40.500Q88.500 41.800 90 41.300L103.800 33.800z" fill="#d93b28"/><path d="M105.800 17.200Q105.600 16.300 106.600 17.800L119.900 40.300Q120.600 41.600 119.200 41L105.800 33.800z" fill="#0ea55b"/><path d="M104.800 35.300L119.300 43.200Q120.300 44.800 118 44.900H91.500Q89.300 44.800 90.300 43.200z" fill="#1b72e8"/></svg>
<span class="t lib" style="top:6.00px;font-size:35.50px;line-height:50px;color:#f1f1f1;font-weight:700;left:124.10px;transform-origin:0 50%;transform:scaleX(0.9782);">akaun</span>
<svg class="b" style="left:1845.00px;top:9.00px" width="50.00" height="50.00" viewBox="0 0 50 50"><defs><clipPath id="c1870"><circle cx="25" cy="25" r="23.200"/></clipPath></defs><circle cx="25" cy="25" r="25" fill="#fafafa"/><circle cx="25" cy="25" r="23.200" fill="#9e9e9e"/><g clip-path="url(#c1870)" fill="#f6f6f6"><ellipse cx="25" cy="21.500" rx="10" ry="12.500"/><path d="M20 31h10v4.500c2 2 9 4 13 8V52H7v-8.500c4-4 11-6 13-8z"/></g></svg>
</body></html>
